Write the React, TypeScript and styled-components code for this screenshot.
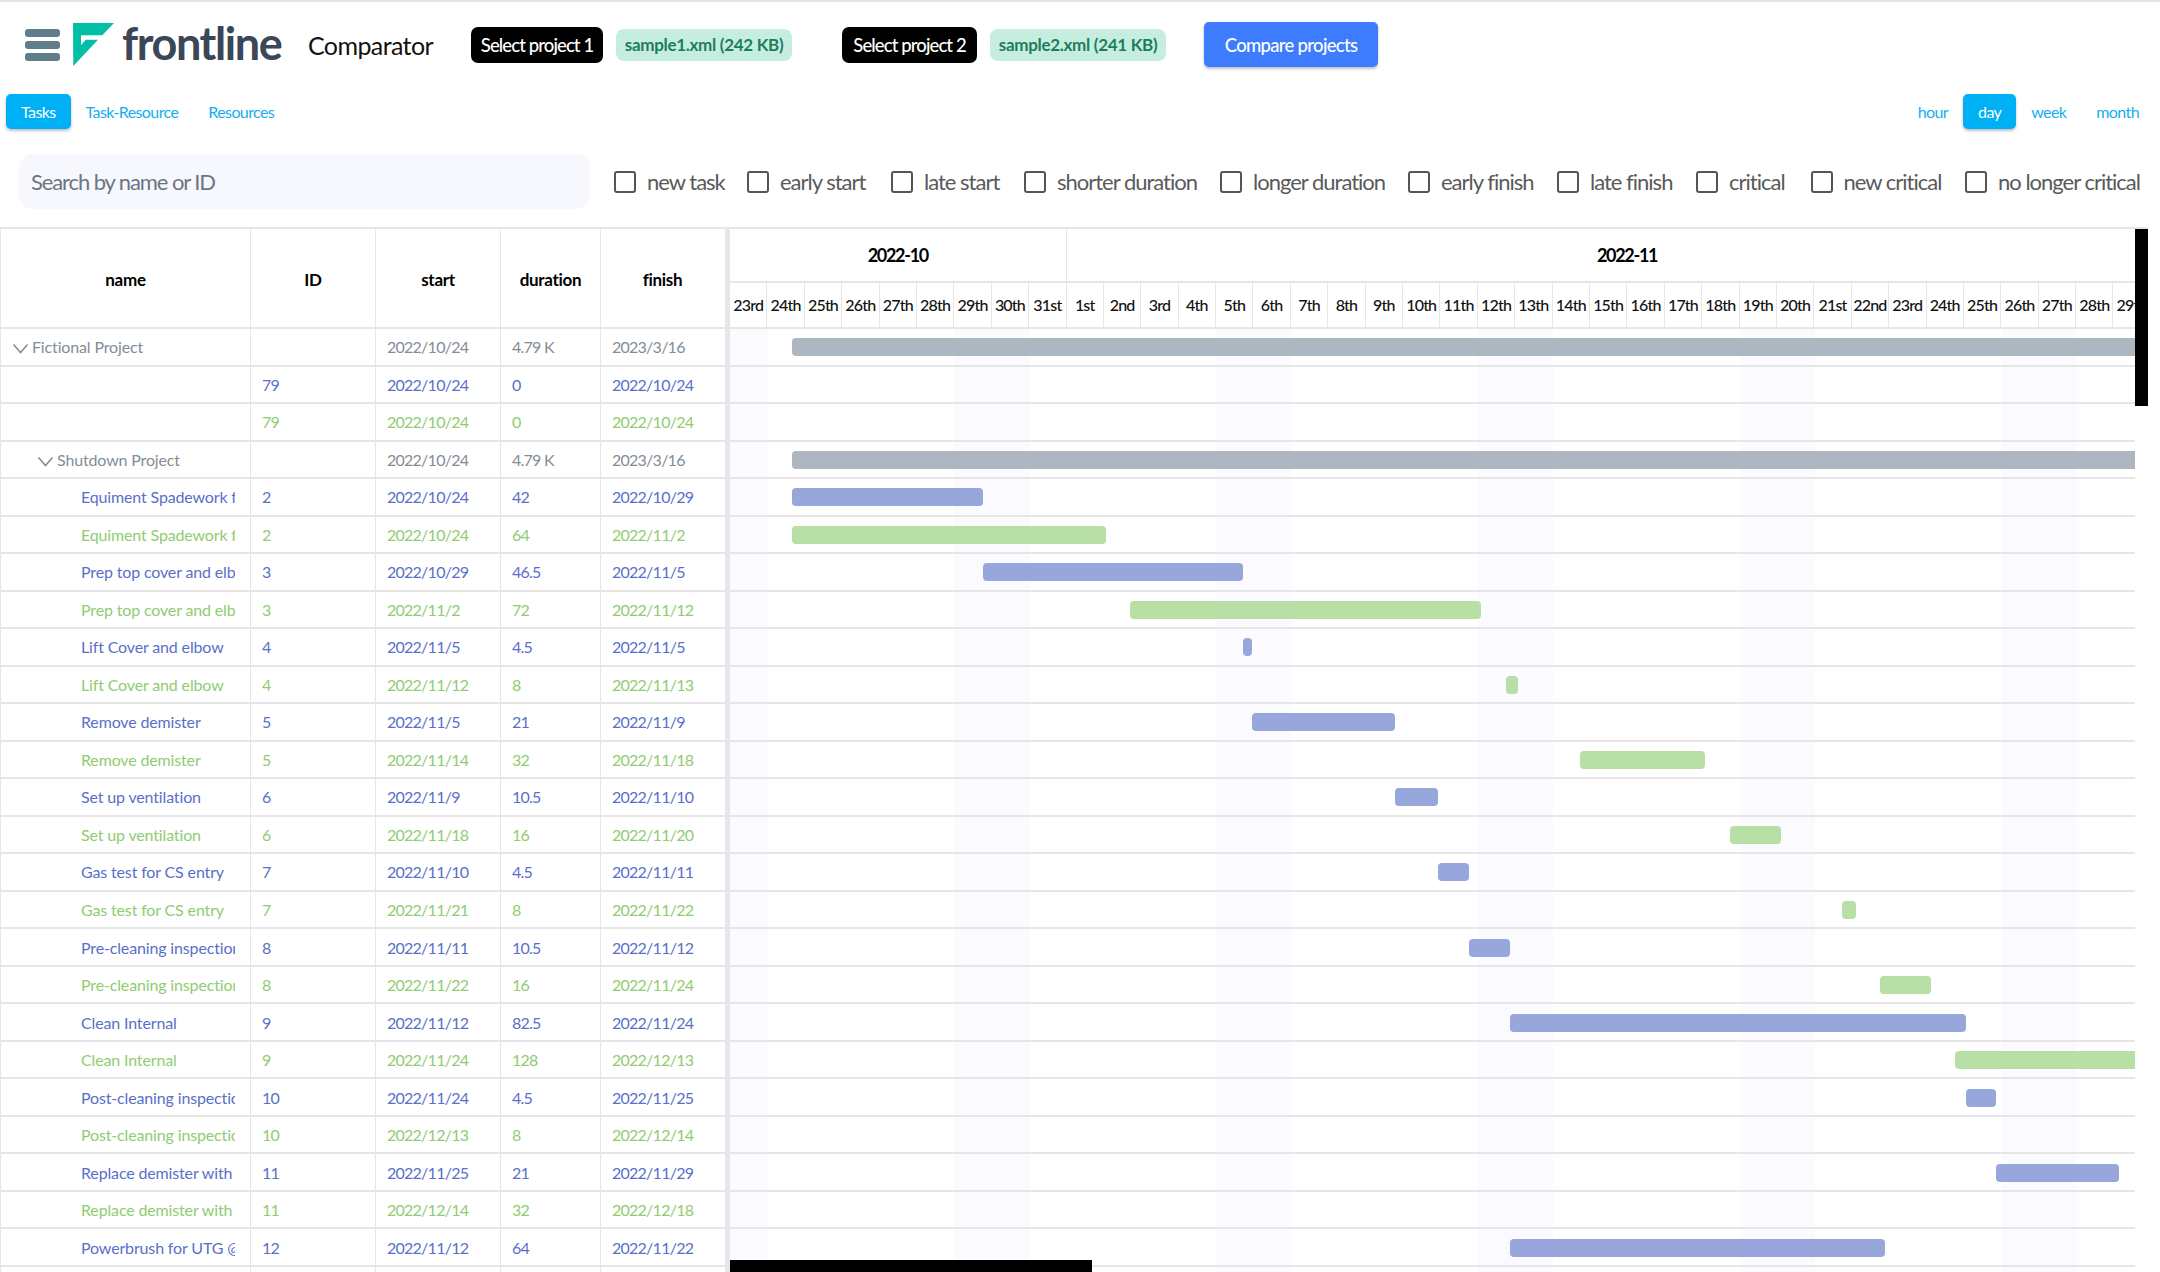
import React from "react";
import styled, { createGlobalStyle } from "styled-components";

const DAY = 37.4;
const ROW = 37.52;
const BODY_FONT = `Lato, "Open Sans", sans-serif`;

const GlobalStyle = createGlobalStyle`
  html, body {
    margin: 0;
    padding: 0;
    background: #fff;
    font-family: ${BODY_FONT};
  }
`;

const Page = styled.div`
  height: 1272px;
  width: 2160px;
  overflow: hidden;
  border-top: 2px solid #e6e6e6;
  box-sizing: border-box;
`;

const TopBar = styled.header`
  display: flex;
  align-items: center;
  height: 85px;
  padding-left: 25px;
`;

const Burger = styled.div`
  display: flex;
  flex-direction: column;
  gap: 4px;
  width: 35px;
  margin-right: 13px;
  & > span {
    height: 8px;
    border-radius: 3px;
    background: #607d8b;
  }
`;

const Wordmark = styled.span`
  font-size: 45px;
  font-weight: 700;
  color: #3b4656;
  letter-spacing: -1.4px;
  margin-left: 8px;
  margin-top: -2px;
  line-height: 1;
  width: 159px;
  flex: none;
`;

const AppName = styled.span`
  flex: none;
  font-size: 25px;
  color: #111;
  letter-spacing: -0.6px;
  margin-left: 27px;
  width: 163px;
`;

const SelectButton = styled.button`
  flex: none;
  border: 0;
  font-family: inherit;
  height: 36px;
  width: ${(p) => p.$w}px;
  border-radius: 7px;
  background: #000;
  color: #fff;
  font-size: 18.5px;
  font-weight: 500;
  letter-spacing: -0.9px;
  padding: 0;
  margin-right: 13px;
`;

const FileChip = styled.span`
  flex: none;
  display: flex;
  align-items: center;
  justify-content: center;
  height: 32px;
  width: 176px;
  border-radius: 8px;
  background: #c6eee0;
  color: #1e7d5c;
  font-size: 17px;
  font-weight: 700;
  letter-spacing: -0.3px;
  margin-right: ${(p) => p.$after}px;
`;

const CompareButton = styled.button`
  flex: none;
  border: 0;
  font-family: inherit;
  height: 45px;
  width: 174px;
  padding: 0;
  border-radius: 5px;
  background: #3d7bff;
  color: #fff;
  font-size: 18.5px;
  font-weight: 500;
  letter-spacing: -0.7px;
  box-shadow: 0 2px 3px rgba(0, 0, 0, 0.25);
`;

const TabsRow = styled.nav`
  display: flex;
  justify-content: space-between;
  padding: 7px 6px 0;
`;

const TabGroup = styled.div`
  display: flex;
`;

const Tab = styled.button`
  border: 0;
  height: 35px;
  padding: 0 15px;
  font-family: inherit;
  font-size: 16px;
  letter-spacing: -0.6px;
  border-radius: 5px;
  background: ${(p) => (p.$active ? "#00b0f5" : "transparent")};
  color: ${(p) => (p.$active ? "#fff" : "#14aef0")};
  box-shadow: ${(p) => (p.$active ? "0 2px 3px rgba(0,0,0,0.25)" : "none")};
`;

const FilterRow = styled.div`
  display: flex;
  align-items: center;
  height: 55px;
  margin-top: 25px;
  padding-left: 19px;
`;

const SearchField = styled.input`
  flex: none;
  box-sizing: border-box;
  width: 571px;
  height: 55px;
  border: 0;
  border-radius: 14px;
  background: #f7f8fd;
  padding: 0 12px;
  font-family: inherit;
  font-size: 22px;
  letter-spacing: -1.1px;
  margin-right: 24px;
  &::placeholder {
    color: #6c7582;
    opacity: 1;
  }
`;

const FilterItem = styled.label`
  flex: none;
  width: ${(p) => p.$w}px;
  display: flex;
  align-items: center;
  font-size: 22px;
  letter-spacing: -1px;
  color: #5a5a5a;
  white-space: nowrap;
  & > i {
    flex: none;
    box-sizing: border-box;
    width: 22px;
    height: 22px;
    border: 2px solid #555;
    border-radius: 3px;
    margin-right: 11px;
  }
`;

const Board = styled.section`
  display: flex;
  margin-top: 18px;
  width: 2148px;
  height: 1045px;
  border-top: 2px solid #e6e6e6;
  overflow: hidden;
`;

const TablePane = styled.div`
  flex: none;
  width: 725px;
  border-left: 1px solid #e6e6e6;
  box-sizing: border-box;
`;

const Splitter = styled.div`
  flex: none;
  width: 5px;
  background: #e6e6ea;
`;

const columns = "250px 125px 125px 100px 123px";

const HeadRow = styled.div`
  display: grid;
  grid-template-columns: ${columns};
  height: 98px;
  border-bottom: 2px solid #e6e6e6;
`;

const HeadCell = styled.div`
  display: flex;
  align-items: center;
  justify-content: center;
  padding-top: 3px;
  font-size: 17px;
  font-weight: 700;
  letter-spacing: -0.3px;
  color: #000;
  border-right: 1px solid #e6e6e6;
  &:last-child {
    border-right: 0;
  }
`;

const toneColor = { parent: "#838d97", base: "#5a6fc9", next: "#8fcc72" };

const Row = styled.div`
  display: grid;
  grid-template-columns: ${columns};
  height: ${ROW}px;
  box-sizing: border-box;
  border-bottom: 2px solid #e6e6e6;
  color: ${(p) => toneColor[p.$tone]};
  font-size: 16px;
  letter-spacing: -0.75px;
`;

const Cell = styled.div`
  display: flex;
  align-items: center;
  padding-left: 11px;
  border-right: 1px solid #e6e6e6;
  white-space: nowrap;
  overflow: hidden;
  &:last-child {
    border-right: 0;
  }
`;

const NameCell = styled(Cell)`
  padding-left: ${(p) => p.$indent}px;
  letter-spacing: -0.15px;
`;

const NameClip = styled.span`
  display: block;
  overflow: hidden;
  flex: none;
  width: ${(p) => p.$w}px;
`;

const Chevron = styled.svg`
  flex: none;
  width: 17px;
  height: 11px;
  margin-top: 4px;
  margin-right: 3px;
  fill: none;
  stroke: #808a93;
  stroke-width: 1.5;
`;

const TimelinePane = styled.div`
  flex: 1;
  min-width: 0;
  position: relative;
`;

const TimelineViewport = styled.div`
  width: 1405px;
  height: 100%;
  overflow: hidden;
`;

const MonthRow = styled.div`
  display: flex;
  height: 54px;
  width: 1460px;
  border-bottom: 2px solid #e6e6e6;
  box-sizing: border-box;
`;

const MonthCell = styled.div`
  flex: none;
  width: ${(p) => p.$days * DAY}px;
  box-sizing: border-box;
  display: flex;
  align-items: center;
  justify-content: center;
  font-size: 18px;
  font-weight: 700;
  letter-spacing: -1.3px;
  color: #000;
  border-right: 1px solid #e6e6e6;
`;

const DayRow = styled.div`
  display: flex;
  height: 46px;
  width: 1460px;
  border-bottom: 2px solid #e6e6e6;
  box-sizing: border-box;
`;

const DayCell = styled.div`
  flex: none;
  width: ${DAY}px;
  box-sizing: border-box;
  display: flex;
  align-items: center;
  justify-content: center;
  padding-bottom: 2px;
  font-size: 16px;
  font-weight: 500;
  letter-spacing: -0.8px;
  color: #111;
  white-space: nowrap;
  overflow: hidden;
  border-right: 1px solid #e6e6e6;
`;

const TimelineBody = styled.div`
  background-image: linear-gradient(to right, #fafaff ${DAY * 2}px, #fff ${DAY * 2}px);
  background-size: ${DAY * 7}px 100%;
  background-position: ${-DAY}px 0;
`;

const TimelineRow = styled.div`
  height: ${ROW}px;
  box-sizing: border-box;
  border-bottom: 2px solid #e6e6e6;
  display: flex;
  align-items: center;
`;

const barColor = {
  parent: "rgba(163, 175, 187, 0.9)",
  base: "rgba(142, 159, 217, 0.92)",
  next: "rgba(178, 221, 158, 0.92)",
};

const Bar = styled.div`
  flex: none;
  height: 18px;
  margin-top: 1px;
  border-radius: ${(p) => (p.$open ? "4px 0 0 4px" : "4px")};
  background: ${(p) => barColor[p.$tone]};
`;

const ScrollThumbY = styled.div`
  position: absolute;
  top: 0;
  right: 0;
  width: 13px;
  height: 177px;
  background: #000;
`;

const ScrollThumbX = styled.div`
  position: absolute;
  left: 0;
  top: 1031px;
  width: 362px;
  height: 12px;
  background: #000;
`;

type Tone = "parent" | "base" | "next";

interface TaskRow {
  tone: Tone;
  name?: string;
  level?: number;
  id?: string;
  start: string;
  duration: string;
  finish: string;
  bar?: [number, number];
}

const rows: TaskRow[] = [
  { tone: "parent", name: "Fictional Project", level: 0, start: "2022/10/24", duration: "4.79 K", finish: "2023/3/16", bar: [792, 2135] },
  { tone: "base", id: "79", start: "2022/10/24", duration: "0", finish: "2022/10/24" },
  { tone: "next", id: "79", start: "2022/10/24", duration: "0", finish: "2022/10/24" },
  { tone: "parent", name: "Shutdown Project", level: 1, start: "2022/10/24", duration: "4.79 K", finish: "2023/3/16", bar: [792, 2135] },
  { tone: "base", name: "Equiment Spadework for the job", level: 2, id: "2", start: "2022/10/24", duration: "42", finish: "2022/10/29", bar: [792, 983] },
  { tone: "next", name: "Equiment Spadework for the job", level: 2, id: "2", start: "2022/10/24", duration: "64", finish: "2022/11/2", bar: [792, 1106] },
  { tone: "base", name: "Prep top cover and elbow", level: 2, id: "3", start: "2022/10/29", duration: "46.5", finish: "2022/11/5", bar: [983, 1243] },
  { tone: "next", name: "Prep top cover and elbow", level: 2, id: "3", start: "2022/11/2", duration: "72", finish: "2022/11/12", bar: [1130, 1481] },
  { tone: "base", name: "Lift Cover and elbow", level: 2, id: "4", start: "2022/11/5", duration: "4.5", finish: "2022/11/5", bar: [1243, 1252] },
  { tone: "next", name: "Lift Cover and elbow", level: 2, id: "4", start: "2022/11/12", duration: "8", finish: "2022/11/13", bar: [1506, 1518] },
  { tone: "base", name: "Remove demister", level: 2, id: "5", start: "2022/11/5", duration: "21", finish: "2022/11/9", bar: [1252, 1395] },
  { tone: "next", name: "Remove demister", level: 2, id: "5", start: "2022/11/14", duration: "32", finish: "2022/11/18", bar: [1580, 1705] },
  { tone: "base", name: "Set up ventilation", level: 2, id: "6", start: "2022/11/9", duration: "10.5", finish: "2022/11/10", bar: [1395, 1438] },
  { tone: "next", name: "Set up ventilation", level: 2, id: "6", start: "2022/11/18", duration: "16", finish: "2022/11/20", bar: [1730, 1781] },
  { tone: "base", name: "Gas test for CS entry", level: 2, id: "7", start: "2022/11/10", duration: "4.5", finish: "2022/11/11", bar: [1438, 1469] },
  { tone: "next", name: "Gas test for CS entry", level: 2, id: "7", start: "2022/11/21", duration: "8", finish: "2022/11/22", bar: [1842, 1856] },
  { tone: "base", name: "Pre-cleaning inspection", level: 2, id: "8", start: "2022/11/11", duration: "10.5", finish: "2022/11/12", bar: [1469, 1510] },
  { tone: "next", name: "Pre-cleaning inspection", level: 2, id: "8", start: "2022/11/22", duration: "16", finish: "2022/11/24", bar: [1880, 1931] },
  { tone: "base", name: "Clean Internal", level: 2, id: "9", start: "2022/11/12", duration: "82.5", finish: "2022/11/24", bar: [1510, 1966] },
  { tone: "next", name: "Clean Internal", level: 2, id: "9", start: "2022/11/24", duration: "128", finish: "2022/12/13", bar: [1955, 2135] },
  { tone: "base", name: "Post-cleaning inspection", level: 2, id: "10", start: "2022/11/24", duration: "4.5", finish: "2022/11/25", bar: [1966, 1996] },
  { tone: "next", name: "Post-cleaning inspection", level: 2, id: "10", start: "2022/12/13", duration: "8", finish: "2022/12/14" },
  { tone: "base", name: "Replace demister with new", level: 2, id: "11", start: "2022/11/25", duration: "21", finish: "2022/11/29", bar: [1996, 2119] },
  { tone: "next", name: "Replace demister with new", level: 2, id: "11", start: "2022/12/14", duration: "32", finish: "2022/12/18" },
  { tone: "base", name: "Powerbrush for UTG @ site", level: 2, id: "12", start: "2022/11/12", duration: "64", finish: "2022/11/22", bar: [1510, 1885] },
  { tone: "next", name: "Powerbrush for UTG @ site", level: 2, id: "12", start: "2022/11/22", duration: "64", finish: "2022/12/2" },
];

const filters: [string, number][] = [
  ["new task", 133],
  ["early start", 144],
  ["late start", 133],
  ["shorter duration", 196],
  ["longer duration", 188],
  ["early finish", 149],
  ["late finish", 139],
  ["critical", 114.5],
  ["new critical", 154.5],
  ["no longer critical", 180],
];

const ordinal = (d: number) => {
  if (d % 10 === 1 && d !== 11) return `${d}st`;
  if (d % 10 === 2 && d !== 12) return `${d}nd`;
  if (d % 10 === 3 && d !== 13) return `${d}rd`;
  return `${d}th`;
};

const days = [
  ...Array.from({ length: 9 }, (_, i) => ordinal(23 + i)),
  ...Array.from({ length: 30 }, (_, i) => ordinal(1 + i)),
];

const TIMELINE_X = 730;
const indents = [11, 36, 80];

const Logo = () => (
  <svg width="41" height="43" viewBox="0 0 41 43">
    <path d="M0 0H41L29.3 12.3H8V22.3L12.7 16.7H25L0.3 43Z" fill="#00bfa5" />
  </svg>
);

export default function App() {
  return (
    <Page>
      <GlobalStyle />
      <TopBar>
        <Burger>
          <span />
          <span />
          <span />
        </Burger>
        <Logo />
        <Wordmark>frontline</Wordmark>
        <AppName>Comparator</AppName>
        <SelectButton $w={132}>Select project 1</SelectButton>
        <FileChip $after={50}>sample1.xml (242 KB)</FileChip>
        <SelectButton $w={135}>Select project 2</SelectButton>
        <FileChip $after={38}>sample2.xml (241 KB)</FileChip>
        <CompareButton>Compare projects</CompareButton>
      </TopBar>
      <TabsRow>
        <TabGroup>
          <Tab $active>Tasks</Tab>
          <Tab>Task-Resource</Tab>
          <Tab>Resources</Tab>
        </TabGroup>
        <TabGroup>
          <Tab>hour</Tab>
          <Tab $active>day</Tab>
          <Tab>week</Tab>
          <Tab>month</Tab>
        </TabGroup>
      </TabsRow>
      <FilterRow>
        <SearchField placeholder="Search by name or ID" />
        {filters.map(([label, width]) => (
          <FilterItem key={label} $w={width}>
            <i />
            {label}
          </FilterItem>
        ))}
      </FilterRow>
      <Board>
        <TablePane>
          <HeadRow>
            <HeadCell>name</HeadCell>
            <HeadCell>ID</HeadCell>
            <HeadCell>start</HeadCell>
            <HeadCell>duration</HeadCell>
            <HeadCell>finish</HeadCell>
          </HeadRow>
          {rows.map((r, i) => {
            const indent = r.level === undefined ? 12 : indents[r.level];
            const isParent = r.tone === "parent";
            return (
              <Row key={i} $tone={r.tone}>
                <NameCell $indent={indent}>
                  {isParent && (
                    <Chevron viewBox="0 0 17 11">
                      <path d="M1.5 1.5L8.5 9.5L15.5 1.5" />
                    </Chevron>
                  )}
                  <NameClip $w={234 - indent - (isParent ? 20 : 0)}>{r.name}</NameClip>
                </NameCell>
                <Cell>{r.id}</Cell>
                <Cell>{r.start}</Cell>
                <Cell>{r.duration}</Cell>
                <Cell>{r.finish}</Cell>
              </Row>
            );
          })}
        </TablePane>
        <Splitter />
        <TimelinePane>
          <TimelineViewport>
            <MonthRow>
              <MonthCell $days={9}>2022-10</MonthCell>
              <MonthCell $days={30}>2022-11</MonthCell>
            </MonthRow>
            <DayRow>
              {days.map((d, i) => (
                <DayCell key={i}>{d}</DayCell>
              ))}
            </DayRow>
            <TimelineBody>
              {rows.map((r, i) => (
                <TimelineRow key={i}>
                  {r.bar && (
                    <Bar
                      $tone={r.tone}
                      $open={r.bar[1] === 2135}
                      style={{
                        marginLeft: r.bar[0] - TIMELINE_X,
                        width: r.bar[1] - r.bar[0],
                      }}
                    />
                  )}
                </TimelineRow>
              ))}
            </TimelineBody>
          </TimelineViewport>
          <ScrollThumbY />
          <ScrollThumbX />
        </TimelinePane>
      </Board>
    </Page>
  );
}
